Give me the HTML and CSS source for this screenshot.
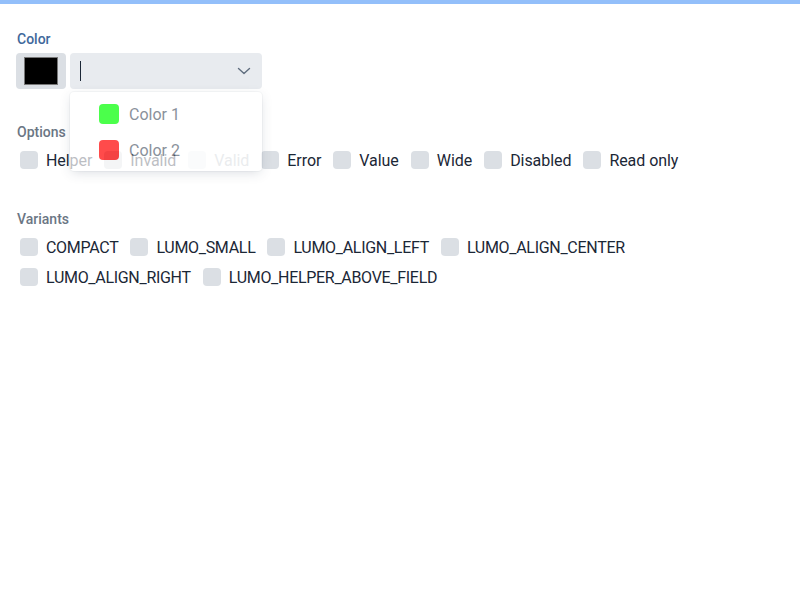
FILE: index.html
```html
<!DOCTYPE html>
<html>
<head>
<meta charset="utf-8">
<link rel="stylesheet" href="styles.css">
</head>
<body>
<div class="topbar"></div>
<main class="page">
  <section class="group">
    <div class="label label-focused">Color</div>
    <div class="field-row">
      <div class="swatch-box"><div class="swatch"></div></div>
      <div class="combo">
        <div class="combo-input"><span class="caret"></span></div>
        <svg class="chevron" width="14" height="8" viewBox="0 0 14 8"><polyline points="1.5,1.5 7,6.5 12.5,1.5" fill="none" stroke="#5f6d7e" stroke-width="1.4" stroke-linecap="round" stroke-linejoin="round"/></svg>
        <div class="overlay">
          <div class="item"><span class="chip chip-green"></span><span class="item-text">Color 1</span></div>
          <div class="item"><span class="chip chip-red"></span><span class="item-text">Color 2</span></div>
        </div>
      </div>
    </div>
  </section>

  <section class="group group-options">
    <div class="label">Options</div>
    <div class="cb-row">
      <label class="cb"><span class="box"></span><span class="cb-text">Helper</span></label>
      <label class="cb"><span class="box"></span><span class="cb-text">Invalid</span></label>
      <label class="cb"><span class="box box-light"></span><span class="cb-text cb-dim">Valid</span></label>
      <label class="cb"><span class="box"></span><span class="cb-text">Error</span></label>
      <label class="cb"><span class="box"></span><span class="cb-text">Value</span></label>
      <label class="cb"><span class="box"></span><span class="cb-text">Wide</span></label>
      <label class="cb"><span class="box"></span><span class="cb-text">Disabled</span></label>
      <label class="cb"><span class="box"></span><span class="cb-text">Read only</span></label>
    </div>
  </section>

  <section class="group group-variants">
    <div class="label">Variants</div>
    <div class="cb-row cb-row-caps">
      <label class="cb"><span class="box"></span><span class="cb-text">COMPACT</span></label>
      <label class="cb"><span class="box"></span><span class="cb-text">LUMO_SMALL</span></label>
      <label class="cb"><span class="box"></span><span class="cb-text">LUMO_ALIGN_LEFT</span></label>
      <label class="cb"><span class="box"></span><span class="cb-text">LUMO_ALIGN_CENTER</span></label>
      <label class="cb"><span class="box"></span><span class="cb-text">LUMO_ALIGN_RIGHT</span></label>
      <label class="cb"><span class="box"></span><span class="cb-text">LUMO_HELPER_ABOVE_FIELD</span></label>
    </div>
  </section>
</main>
</body>
</html>
```

FILE: styles.css
```css
* { box-sizing: border-box; }
html, body { margin: 0; padding: 0; background: #fff; }
body {
  font-family: Roboto, "Liberation Sans", sans-serif;
  color: #1b2736;
  width: 800px;
  height: 600px;
  overflow: hidden;
}
.topbar { height: 4px; background: #93bffa; }
.page { padding: 28px 16px 0 16px; }
.label {
  font-size: 14px;
  line-height: 14px;
  height: 14px;
  font-weight: 500;
  color: #6b7684;
  padding-left: 1px;
}
.label-focused { color: #40689b; }
.field-row { display: flex; gap: 4px; margin-top: 7px; }
.swatch-box {
  width: 50px; height: 36px;
  background: #dbdfe4;
  border-radius: 4px;
  padding: 4px 8px;
}
.swatch {
  width: 34px; height: 28px;
  background: #000;
  border: 1px solid #777;
}
.combo {
  position: relative;
  width: 192px; height: 36px;
  background: #e8ebef;
  border-radius: 4px;
  display: flex;
  align-items: center;
  justify-content: space-between;
  padding: 0 11px 0 10px;
}
.combo-input { height: 20px; display: flex; align-items: center; }
.caret { display: block; width: 1px; height: 20px; background: #1b2736; }
.chevron { display: block; }
.overlay {
  position: absolute;
  left: 0; top: 39px;
  width: 192px; height: 79px;
  background: #fff;
  border-radius: 4px;
  box-shadow: 0 0 0 1px rgba(30,50,80,0.05), 0 3px 12px -2px rgba(30,50,80,0.25);
  opacity: 0.7;
  padding: 4px 0 3px 0;
  z-index: 5;
}
.item { height: 36px; display: flex; align-items: center; padding-left: 29px; }
.chip { width: 20px; height: 20px; border-radius: 4px; }
.chip-green { background: #00ff00; }
.chip-red { background: #ff0000; }
.item-text { margin-left: 10px; font-size: 16px; color: #586371; }
.group-options { margin-top: 36px; }
.group-variants { margin-top: 37px; }
.cb-row { display: flex; flex-wrap: wrap; margin-top: 6px; letter-spacing: -0.06px; }
.cb-row-caps { letter-spacing: -0.3px; }
.cb { display: flex; align-items: center; height: 30px; font-size: 16px; }
.box {
  width: 18px; height: 18px;
  border-radius: 4px;
  background: #dbdfe4;
  margin-left: 4px;
}
.box-light { background: #f1f3f5; }
.cb-text { padding: 1px 8px 0 8px; color: #1b2736; }
.cb-dim { color: #b9bfc7; }
```
